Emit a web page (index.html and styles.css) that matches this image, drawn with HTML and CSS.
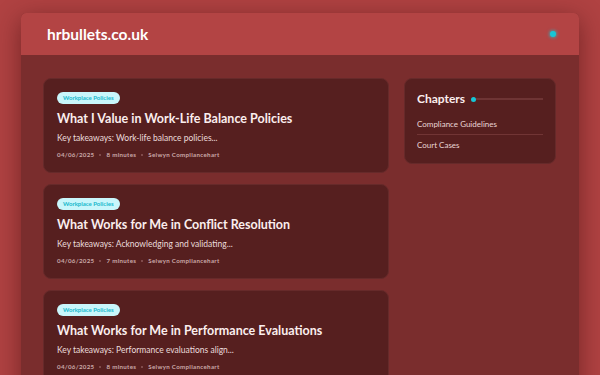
FILE: index.html
```html
<!DOCTYPE html>
<html lang="en">
<head>
<meta charset="utf-8">
<title>hrbullets.co.uk</title>
<link rel="stylesheet" href="styles.css">
</head>
<body>
<div class="shell">
  <header class="topbar">
    <a class="logo" href="#">hrbullets.co.uk</a>
    <span class="pulse"></span>
  </header>
  <main class="content">
    <section class="posts">
      <article class="card">
        <span class="tag">Workplace Policies</span>
        <h2 class="title">What I Value in Work-Life Balance Policies</h2>
        <p class="excerpt">Key takeaways: Work-life balance policies...</p>
        <div class="meta"><span>04/06/2025</span><span class="sep"></span><span>8 minutes</span><span class="sep"></span><span>Selwyn Compliancehart</span></div>
      </article>
      <article class="card">
        <span class="tag">Workplace Policies</span>
        <h2 class="title">What Works for Me in Conflict Resolution</h2>
        <p class="excerpt">Key takeaways: Acknowledging and validating...</p>
        <div class="meta"><span>04/06/2025</span><span class="sep"></span><span>7 minutes</span><span class="sep"></span><span>Selwyn Compliancehart</span></div>
      </article>
      <article class="card">
        <span class="tag">Workplace Policies</span>
        <h2 class="title">What Works for Me in Performance Evaluations</h2>
        <p class="excerpt">Key takeaways: Performance evaluations align...</p>
        <div class="meta"><span>04/06/2025</span><span class="sep"></span><span>8 minutes</span><span class="sep"></span><span>Selwyn Compliancehart</span></div>
      </article>
    </section>
    <aside class="side">
      <div class="side-card">
        <div class="side-head">
          <h3>Chapters</h3>
          <span class="dot"></span>
          <span class="line"></span>
        </div>
        <ul class="chapters">
          <li>Compliance Guidelines</li>
          <li>Court Cases</li>
        </ul>
      </div>
    </aside>
  </main>
</div>
</body>
</html>
```
FILE: styles.css
```css
* { box-sizing: border-box; }
html, body { margin: 0; padding: 0; }
body {
  background: #b04242;
  font-family: Lato, "Noto Sans", sans-serif;
  color: #f3e6e6;
  height: 375px;
  overflow: hidden;
  padding: 13px 21px 0;
}
.shell {
  background: #7a2d2d;
  border-radius: 5px 5px 0 0;
  box-shadow: 0 6px 26px rgba(40, 0, 0, 0.45);
  min-height: 400px;
}
.topbar {
  height: 42px;
  background: #b34444;
  border-radius: 5px 5px 0 0;
  display: flex;
  align-items: center;
  justify-content: space-between;
  padding: 0 23px 0 26px;
}
.logo {
  color: #fff;
  text-decoration: none;
  font-weight: 700;
  font-size: 15.5px;
}
.pulse {
  width: 6px;
  height: 6px;
  border-radius: 50%;
  background: #16c6d6;
  box-shadow: 0 0 3px 1px rgba(22, 198, 214, 0.6);
}
.content {
  display: flex;
  gap: 15px;
  padding: 23px 23px 0 22px;
  align-items: flex-start;
}
.posts {
  width: 346px;
  display: flex;
  flex-direction: column;
  gap: 11px;
}
.card {
  background: #561f1f;
  border: 1px solid #662a2a;
  border-radius: 8px;
  padding: 13px 13px 12px;
  display: flex;
  flex-direction: column;
  align-items: flex-start;
}
.tag {
  background: #c9f6fb;
  color: #17b8cc;
  font-size: 6px;
  font-weight: 700;
  border-radius: 7px;
  padding: 2px 6px;
  line-height: 8px;
}
.title {
  margin: 6px 0 0;
  font-size: 12.5px;
  font-weight: 700;
  color: #fbeeee;
  line-height: 17px;
}
.excerpt {
  margin: 5px 0 0;
  font-size: 8.5px;
  color: #ebdcdc;
  line-height: 12px;
}
.meta {
  margin-top: 6px;
  display: flex;
  align-items: center;
  gap: 5px;
  font-size: 6.2px;
  font-weight: 700;
  color: #c9a8a8;
  line-height: 10px;
  letter-spacing: 0.3px;
}
.meta .sep {
  width: 2px;
  height: 2px;
  border-radius: 50%;
  background: #8e5a5a;
}
.side { width: 152px; }
.side-card {
  background: #561f1f;
  border: 1px solid #662a2a;
  border-radius: 8px;
  padding: 12px 12px 8px 12px;
}
.side-head {
  display: flex;
  align-items: center;
}
.side-head h3 {
  margin: 0;
  font-size: 12px;
  font-weight: 700;
  color: #fbeeee;
  line-height: 16px;
}
.dot {
  width: 5px;
  height: 5px;
  border-radius: 50%;
  background: #16c6d6;
  margin-left: 6px;
}
.line {
  flex: 1;
  height: 2px;
  background: #6e3434;
}
.chapters {
  list-style: none;
  margin: 8px 0 0;
  padding: 0;
}
.chapters li {
  font-size: 8px;
  color: #ead6d6;
  padding: 5px 0;
  line-height: 10px;
}
.chapters li:first-child { padding-top: 4px; }
.chapters li + li { border-top: 1px solid #713535; }
```
